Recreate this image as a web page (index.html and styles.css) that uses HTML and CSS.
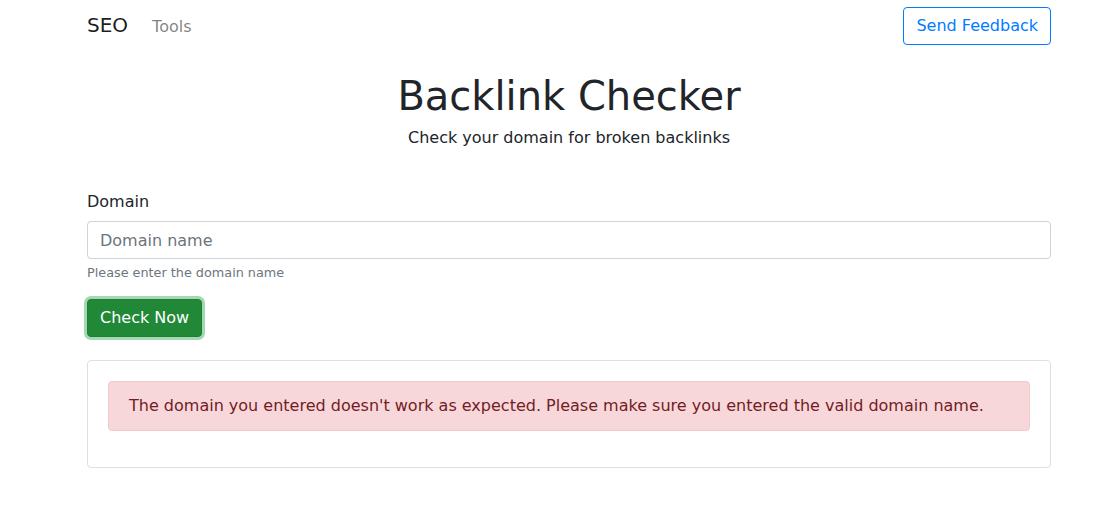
FILE: index.html
```html
<!DOCTYPE html>
<html>
<head>
<meta charset="utf-8">
<link rel="stylesheet" href="styles.css">
</head>
<body>
<nav class="navbar">
  <div class="nav-left">
    <a class="brand">SEO</a>
    <a class="nav-link">Tools</a>
  </div>
  <button class="btn btn-outline">Send Feedback</button>
</nav>
<main class="container">
  <header class="hero">
    <h1>Backlink Checker</h1>
    <p>Check your domain for broken backlinks</p>
  </header>
  <form class="form">
    <label class="label">Domain</label>
    <input class="input" type="text" placeholder="Domain name">
    <small class="help">Please enter the domain name</small>
    <div><button type="button" class="btn btn-success">Check Now</button></div>
  </form>
  <section class="card">
    <div class="alert">The domain you entered doesn't work as expected. Please make sure you entered the valid domain name.</div>
  </section>
</main>
</body>
</html>
```
FILE: styles.css
```css
* { box-sizing: border-box; }
body {
  margin: 0;
  font-family: "DejaVu Sans", Verdana, sans-serif;
  font-size: 16px;
  line-height: 1.5;
  color: #212529;
  background: #fff;
}
.navbar {
  width: 964px;
  margin-left: 87px;
  height: 50px;
  padding-top: 6px;
  display: flex;
  justify-content: space-between;
  align-items: flex-start;
}
.nav-left { display: flex; align-items: baseline; padding-top: 4px; }
.brand { font-size: 20px; line-height: 30px; color: rgba(0,0,0,.9); margin-right: 24px; }
.nav-link { font-size: 16px; color: rgba(0,0,0,.5); }
.btn {
  font-family: inherit;
  font-size: 16px;
  line-height: 24px;
  padding: 6px 12px;
  border-radius: 4px;
  border: 1px solid transparent;
  cursor: pointer;
}
.btn-outline { color: #007bff; border-color: #007bff; background: #fff; margin-top: 1px; }
.container { width: 964px; margin-left: 87px; }
.hero { text-align: center; margin-top: 22px; }
.hero h1 { font-size: 40px; font-weight: 500; line-height: 48px; margin: 0 0 6px; }
.hero p { margin: 0; font-size: 16px; line-height: 24px; }
.form { margin-top: 40px; display: flex; flex-direction: column; }
.label { line-height: 24px; margin-bottom: 7px; }
.input {
  font-family: inherit;
  font-size: 16px;
  height: 38px;
  padding: 6px 12px;
  border: 1px solid #ced4da;
  border-radius: 4px;
  color: #495057;
}
.input::placeholder { color: #6c757d; }
.help { font-size: 12.8px; color: #6c757d; margin-top: 4px; line-height: 19px; }
.btn-success {
  margin-top: 17px;
  color: #fff;
  background: #218838;
  border-color: #1e7e34;
  box-shadow: 0 0 0 3px rgba(72,180,97,.5);
}
.card {
  margin-top: 23px;
  border: 1px solid rgba(0,0,0,.125);
  border-radius: 4px;
  padding: 20px 20px 20px;
}
.alert {
  background: #f8d7da;
  border: 1px solid #f5c6cb;
  color: #721c24;
  border-radius: 4px;
  padding: 12px 20px;
  margin-bottom: 16px;
}
```
